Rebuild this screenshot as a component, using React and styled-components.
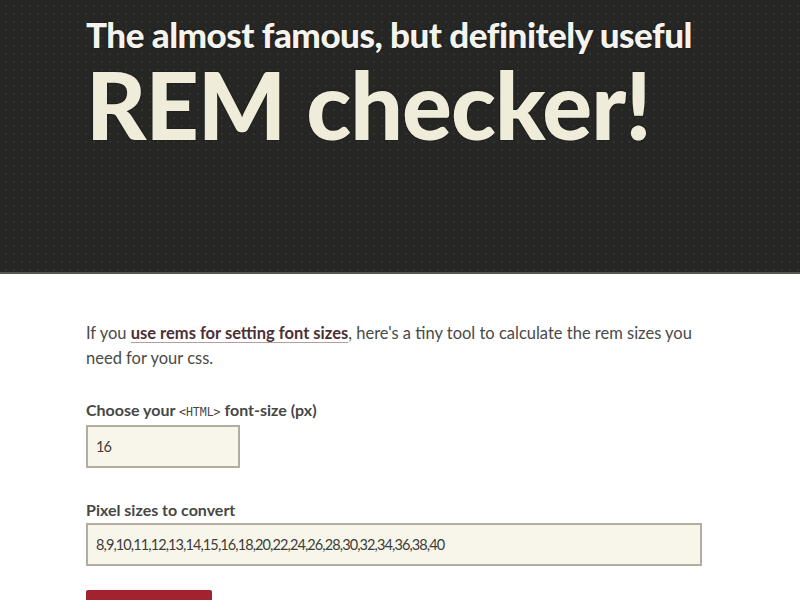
import React, { useState } from 'react';
import styled, { createGlobalStyle } from 'styled-components';

const GlobalStyle = createGlobalStyle`
  html, body {
    margin: 0;
    padding: 0;
    background: #ffffff;
  }
  body {
    font-family: "Lato", "Noto Sans", sans-serif;
    color: #454545;
  }
`

const Header = styled.header`
  height: 274px;
  box-sizing: border-box;
  padding: 12px 86px 0;
  background-color: #262725;
  background-image: radial-gradient(circle, #32332f 1px, transparent 1.5px);
  background-size: 8px 8px;
  background-position: 2px 2px;
  border-bottom: 2px solid #55564f;
`

const Kicker = styled.h2`
  margin: 0;
  font-size: 35px;
  font-weight: 900;
  line-height: 44px;
  letter-spacing: -0.5px;
  color: #f4f3ee;
  text-shadow: 0 0 2px rgba(0, 0, 0, 0.6);
`

const Title = styled.h1`
  margin: 0;
  font-size: 93px;
  font-weight: 900;
  line-height: 96px;
  letter-spacing: -1px;
  color: #efecda;
  text-shadow: 0 0 2px rgba(0, 0, 0, 0.6);
`

const Main = styled.main`
  padding: 47px 86px 0;
  max-width: 616px;
`

const Intro = styled.p`
  margin: 0 0 29px;
  font-size: 16.5px;
  line-height: 25px;
  color: #4a4a48;
`

const Link = styled.a`
  color: #4b2f35;
  font-weight: 700;
  text-decoration: underline;
  text-decoration-color: #b79da2;
  text-underline-offset: 3px;
`

const Field = styled.div`
  display: flex;
  flex-direction: column;
  align-items: flex-start;
  margin-bottom: ${p => p.$last ? '24px' : '32px'};
`

const Label = styled.label`
  font-size: 16px;
  font-weight: 700;
  line-height: 20px;
  color: #474745;
  margin-bottom: 3px;
`

const Code = styled.code`
  font-family: "DejaVu Sans Mono", monospace;
  font-size: 11.5px;
  font-weight: 400;
`

const Input = styled.input`
  box-sizing: border-box;
  width: ${p => p.$wide ? '616px' : '154px'};
  height: 43px;
  padding: 0 8px;
  background: #f8f6ea;
  border: 2px solid #b2ae9f;
  font-family: "Lato", "Noto Sans", sans-serif;
  font-size: 14.5px;
  letter-spacing: -0.9px;
  color: #3d3d3b;
  outline: none;
`

const Button = styled.button`
  width: 126px;
  height: 44px;
  border: none;
  border-radius: 2px;
  background: #a2232f;
  color: #fff;
  font-family: "Lato", sans-serif;
  font-size: 16px;
  font-weight: 700;
`

export default function App() {
  const [base, setBase] = useState('16');
  const [sizes, setSizes] = useState('8,9,10,11,12,13,14,15,16,18,20,22,24,26,28,30,32,34,36,38,40');

  return (
    <>
      <GlobalStyle />
      <Header>
        <Kicker>The almost famous, but definitely useful</Kicker>
        <Title>REM checker!</Title>
      </Header>
      <Main>
        <Intro>
          If you <Link href="#">use rems for setting font sizes</Link>, here's a tiny tool to calculate the rem sizes you need for your css.
        </Intro>
        <Field>
          <Label htmlFor="base">Choose your <Code>&lt;HTML&gt;</Code> font-size (px)</Label>
          <Input id="base" value={base} onChange={e => setBase(e.target.value)} />
        </Field>
        <Field $last>
          <Label htmlFor="sizes">Pixel sizes to convert</Label>
          <Input id="sizes" $wide value={sizes} onChange={e => setSizes(e.target.value)} />
        </Field>
        <Button>Convert</Button>
      </Main>
    </>
  );
}
